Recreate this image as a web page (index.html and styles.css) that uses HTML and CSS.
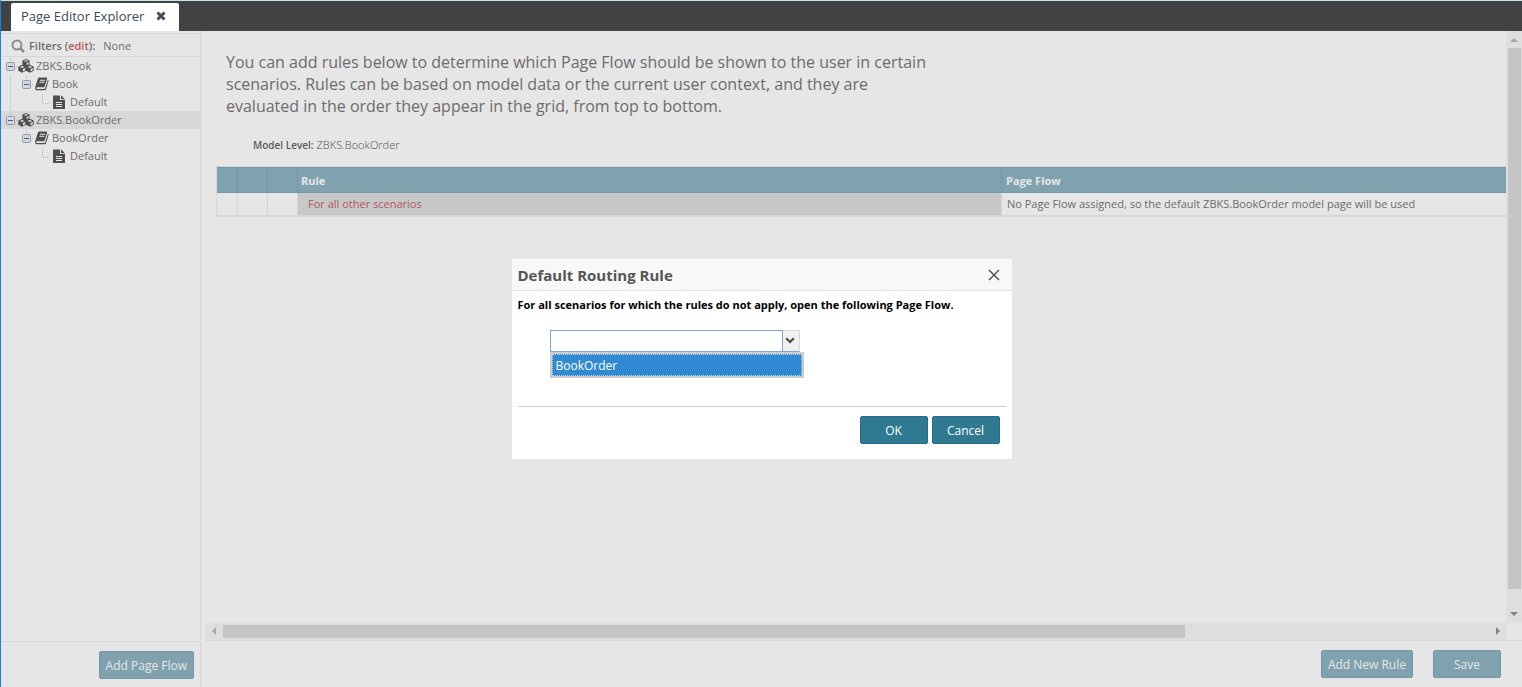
FILE: index.html
```html
<!DOCTYPE html>
<html lang="en">
<head>
<meta charset="utf-8">
<title>Page Editor Explorer</title>
<link rel="stylesheet" href="styles.css">
</head>
<body>
<svg class="sprites" aria-hidden="true">
  <symbol id="cubes" viewBox="0 0 16 14">
    <path d="M8 0 11.600 1.500V5.800L15.700 7.500V11.800L12 13.700 8 11.800 4 13.700.3 11.800V7.500L4.400 5.800V1.500Z" fill="#505050"/>
    <path d="M5.800 1.900 8 2.800 10.200 1.900 8 1ZM1.800 7.900 4.200 8.900 6.500 7.900 4.200 6.900ZM9.500 7.900 11.900 8.900 14.200 7.900 11.900 6.900ZM8.700 4 10.600 3.100V5.300L8.700 6.100ZM4.900 10 7.200 9V11.300L4.900 12.400ZM12.600 10 14.800 9V11.300L12.600 12.400Z" fill="#e0e0e0"/>
  </symbol>
  <symbol id="book" viewBox="0 0 14 14">
    <path d="M4.300.5H11.400Q12.400.5 12.100 1.500L9.600 9.400Q9.300 10.300 8.300 10.300H2Q1.100 10.600 1.300 11.400 1.500 11.900 2.200 11.900H9.200Q10 11.900 10.300 11L13 2.400Q13.800 3 13.500 4L11.200 11.700Q10.800 13.300 9.300 13.300H2Q.2 13.300.1 11.400L.4 9.500 2.900 1.600Q3.300.5 4.300.5Z" fill="#4f4f4f"/>
    <path d="M5 3.300H10M4.400 5.300H9.400" stroke="#e6e6e6"/>
  </symbol>
  <symbol id="file" viewBox="0 0 12 14">
    <path d="M0 .5H7V5H12V14H0ZM8 .3 12 4.200H8Z" fill="#4f4f4f"/>
    <path d="M3 7.500H9M3 9.500H9M3 11.500H9" stroke="#e6e6e6"/>
  </symbol>
  <symbol id="toggle" viewBox="0 0 16 18">
    <rect x="4.500" y="5.500" width="8" height="8" rx="1" fill="#d5d7dc" stroke="#8f9aaf"/>
    <path d="M6 9.500H11" stroke="#4c5c7c"/>
  </symbol>
  <symbol id="elbow" viewBox="0 0 16 18">
    <path d="M8.500 1V10M9 10.500H16" fill="none" stroke="#b5b5b5" stroke-dasharray="1 1"/>
  </symbol>
  <symbol id="stem" viewBox="0 0 16 18">
    <path d="M8.500 1V5M14 9.500H16" fill="none" stroke="#b5b5b5" stroke-dasharray="1 1"/>
  </symbol>
  <symbol id="trunk" viewBox="0 0 16 18">
    <path d="M8.500 0V18" fill="none" stroke="#b5b5b5" stroke-dasharray="1 1"/>
  </symbol>
</svg>

<div class="app">
  <header class="tabs">
    <div class="tab">
      <span>Page Editor Explorer</span>
      <button class="tab-close" aria-label="Close tab"><svg width="10" height="10" viewBox="0 0 10 10"><path d="M1.500 1.500 8.500 8.500M8.500 1.500 1.500 8.500" stroke="#414c61" stroke-width="3"/></svg></button>
    </div>
  </header>

  <div class="workspace">
    <aside class="sidebar">
      <div class="filters">
        <svg width="14" height="14" viewBox="0 0 14 14"><circle cx="6" cy="6" r="4.500" fill="none" stroke="#8c8c8c" stroke-width="2"/><path d="M9.500 9.500 13 13" stroke="#8c8c8c" stroke-width="2.500"/></svg>
        <span class="filters-label">Filters (<a href="#">edit</a>):</span>
        <span>None</span>
      </div>
      <ul class="tree">
        <li class="node"><svg class="cell"><use href="#stem"/><use href="#toggle"/></svg><svg class="cubes"><use href="#cubes"/></svg><span>ZBKS.Book</span></li>
        <li class="node"><svg class="cell"><use href="#trunk"/></svg><svg class="cell"><use href="#stem"/><use href="#toggle"/></svg><svg class="book"><use href="#book"/></svg><span>Book</span></li>
        <li class="node"><svg class="cell"><use href="#trunk"/></svg><span class="cell"></span><svg class="cell"><use href="#elbow"/></svg><svg class="file"><use href="#file"/></svg><span>Default</span></li>
        <li class="node selected"><svg class="cell"><use href="#stem"/><use href="#toggle"/></svg><svg class="cubes"><use href="#cubes"/></svg><span>ZBKS.BookOrder</span></li>
        <li class="node"><span class="cell"></span><svg class="cell"><use href="#stem"/><use href="#toggle"/></svg><svg class="book"><use href="#book"/></svg><span>BookOrder</span></li>
        <li class="node"><span class="cell"></span><span class="cell"></span><svg class="cell"><use href="#elbow"/></svg><svg class="file"><use href="#file"/></svg><span>Default</span></li>
      </ul>
      <div class="sidebar-footer"><button class="btn">Add Page Flow</button></div>
    </aside>

    <main class="main">
      <div class="viewport">
        <div class="content">
          <p class="intro">You can add rules below to determine which Page Flow should be shown to the user in certain scenarios. Rules can be based on model data or the current user context, and they are evaluated in the order they appear in the grid, from top to bottom.</p>
          <div class="level"><b>Model Level:</b><span>ZBKS.BookOrder</span></div>
          <table class="rules">
            <colgroup><col class="col-first"><col class="col-tool"><col class="col-tool"><col class="col-rule"><col></colgroup>
            <thead><tr><th></th><th></th><th></th><th>Rule</th><th>Page Flow</th></tr></thead>
            <tbody><tr><td></td><td></td><td></td><td class="rule"><a href="#">For all other scenarios</a></td><td>No Page Flow assigned, so the default ZBKS.BookOrder model page will be used</td></tr></tbody>
          </table>
        </div>
        <div class="vbar">
          <svg width="16" height="17"><path d="M4 11H12L8 7Z" fill="#a8a8a8"/></svg>
          <div class="vtrack"><div class="vthumb"></div></div>
          <svg width="16" height="17"><path d="M4 6H12L8 10Z" fill="#828282"/></svg>
        </div>
        <div class="hbar">
          <svg width="17" height="17"><path d="M10 4V12L6 8Z" fill="#a8a8a8"/></svg>
          <div class="htrack"><div class="hthumb"></div></div>
          <svg width="17" height="17"><path d="M7 4V12L11 8Z" fill="#828282"/></svg>
        </div>
      </div>
      <div class="main-footer"><button class="btn">Add New Rule</button><button class="btn save">Save</button></div>
    </main>

    <div class="overlay">
      <section class="dialog" role="dialog" aria-labelledby="dialog-title">
        <div class="dialog-head">
          <h2 id="dialog-title">Default Routing Rule</h2>
          <button class="dialog-close" aria-label="Close"><svg width="12" height="12" viewBox="0 0 12 12"><path d="M1 1 11 11M11 1 1 11" stroke="#555" stroke-width="1.500"/></svg></button>
        </div>
        <div class="dialog-body">
          <label for="flow">For all scenarios for which the rules do not apply, open the following Page Flow.</label>
          <div class="combo">
            <input id="flow" type="text" role="combobox" aria-expanded="true">
            <button class="combo-arrow" aria-label="Show options"><svg width="10" height="7" viewBox="0 0 10 7"><path d="M1.200 1.200 5 5 8.800 1.200" fill="none" stroke="#4a4a4a" stroke-width="2.200"/></svg></button>
            <div class="options" role="listbox"><div class="option" role="option">BookOrder</div></div>
          </div>
        </div>
        <div class="dialog-footer"><button class="btn primary">OK</button><button class="btn primary">Cancel</button></div>
      </section>
    </div>
  </div>
</div>
</body>
</html>
```
FILE: styles.css
```css
* { box-sizing: border-box; }
body { margin: 0; font: 11px/18px "Open Sans", sans-serif; color: #6c6c6c; background: #e6e6e6; }
button, input { font: inherit; margin: 0; padding: 0; }
a { color: #b3595e; text-decoration: none; }
svg { display: block; flex: none; }
.sprites { position: absolute; width: 0; height: 0; }

.app { display: flex; flex-direction: column; height: 100vh; border-left: 1px solid #1883d7; }
.tabs { display: flex; height: 31px; padding: 2px 10px 0; background: #424242; border-top: 1px solid #c5e9ee; }
.tab { display: flex; align-items: center; gap: 12px; padding: 0 13px 2px 10px; background: #fff; border-radius: 2px 2px 0 0; font-size: 13px; color: #3c4a58; }
.tab-close { border: 0; background: none; }

.workspace { position: relative; flex: 1; display: flex; min-height: 0; }
.sidebar { display: flex; flex-direction: column; width: 200px; padding-top: 2px; border-right: 1px solid #d6d6d6; }
.filters { display: flex; align-items: center; gap: 4px; height: 24px; padding: 2px 0 0 10px; border-top: 1px solid #d6d6d6; border-bottom: 1px solid #d6d6d6; }
.filters-label { font-weight: 600; margin-right: 4px; }
.tree { flex: 1; margin: 0; padding: 0; list-style: none; }
.node { display: flex; align-items: center; height: 18px; padding-left: 1px; }
.node.selected { background: #d7d7d7; }
.cell { width: 16px; height: 18px; }
.cubes { width: 16px; height: 14px; margin-right: 2px; }
.book { width: 14px; height: 14px; margin: 0 3px 0 1px; }
.file { width: 12px; height: 14px; margin: 0 5px 0 3px; }
.sidebar-footer { display: flex; justify-content: flex-end; height: 46px; padding: 9px 6px; border-top: 1px solid #d6d6d6; }

.btn { height: 28px; padding: 2px 6px 0; border: 1px solid #7596ab; border-radius: 2px; background: #7fa2ae; color: #e6e6e6; font-size: 12px; }
.save { width: 68px; }

.main { flex: 1; display: flex; flex-direction: column; min-width: 0; padding-left: 5px; }
.viewport { flex: 1; display: grid; grid-template: minmax(0, 1fr) 17px / minmax(0, 1fr) 16px; }
.content { overflow: hidden; padding: 20px 0 0 10px; }
.intro { max-width: 720px; margin: 0 0 19px; padding-left: 10px; font-size: 16px; line-height: 22px; color: #6c6c6c; }
.level { display: flex; gap: 3px; margin-bottom: 12px; padding-left: 37px; }
.level b { font-weight: 600; font-size: 10px; color: #5a5a5a; }
.level span { font-weight: 300; color: #505050; }
.rules { width: 100%; table-layout: fixed; border-collapse: separate; border-spacing: 0; border: 1px solid #d6d6d6; border-width: 1px 0 2px 1px; }
.col-first { width: 21px; }
.col-tool { width: 30px; }
.col-rule { width: 704px; }
.rules th { height: 26px; padding: 2px 3px 0; text-align: left; line-height: 18px; color: #e6e6e6; background: #7fa2ae; border: 1px solid #7596ab; border-width: 1px 1px 1px 0; }
.rules th:last-child { border-right: 0; padding-left: 4px; }
.rules td { height: 22px; padding: 0 5px; border-right: 1px solid #d6d6d6; }
.rules td:last-child { border-right: 0; }
.rules .rule { padding-left: 10px; background: #c8c8c8; }

.vbar { display: flex; flex-direction: column; background: #dedede; }
.vtrack { flex: 1; padding: 0 1px 0 2px; }
.vthumb { height: 97%; background: #c5c5c5; }
.hbar { display: flex; background: #dedede; }
.htrack { flex: 1; padding: 2px 0; }
.hthumb { width: 76%; height: 13px; background: #c5c5c5; }
.main-footer { display: flex; justify-content: flex-end; gap: 20px; height: 47px; padding: 9px 21px 0 0; border-top: 1px solid #d6d6d6; }

.overlay { position: absolute; inset: 0; display: flex; align-items: center; justify-content: center; }
.dialog { width: 500px; background: #fff; color: #000; }
.dialog-head { display: flex; align-items: center; justify-content: space-between; height: 32px; padding: 0 12px 0 6px; background: #f8f8f8; border-bottom: 1px solid #e2e2e2; }
.dialog-head h2 { margin: 0; font-size: 15px; color: #555; }
.dialog-close { border: 0; background: none; }
.dialog-body { margin: 0 6px; padding: 5px 0 54px; border-bottom: 1px solid #ccc; }
.dialog-body label { display: block; font-weight: 700; }
.combo { position: relative; display: flex; width: 250px; height: 22px; margin: 16px 0 0 32px; }
.combo input { flex: 1; min-width: 0; border: 1px solid #7aa7d6; padding: 0 4px; outline: 0; }
.combo-arrow { display: flex; align-items: center; justify-content: center; width: 17px; padding: 0 2px 2px 0; border: 1px solid #d9d9d9; border-left: 0; border-bottom-color: #7aa7d6; background: #f1f1f1; }
.options { position: absolute; top: 22px; left: 0; width: 254px; padding: 2px; background: #ccc; }
.option { height: 22px; padding-left: 3px; line-height: 22px; font-size: 12px; color: #fff; background: #318ad1; border: 1px dotted #b5d8f2; }
.dialog-footer { display: flex; justify-content: flex-end; gap: 4px; padding: 9px 12px 15px; }
.primary { width: 68px; background: #2f7a91; border-color: #2a688c; color: #fff; }
```
